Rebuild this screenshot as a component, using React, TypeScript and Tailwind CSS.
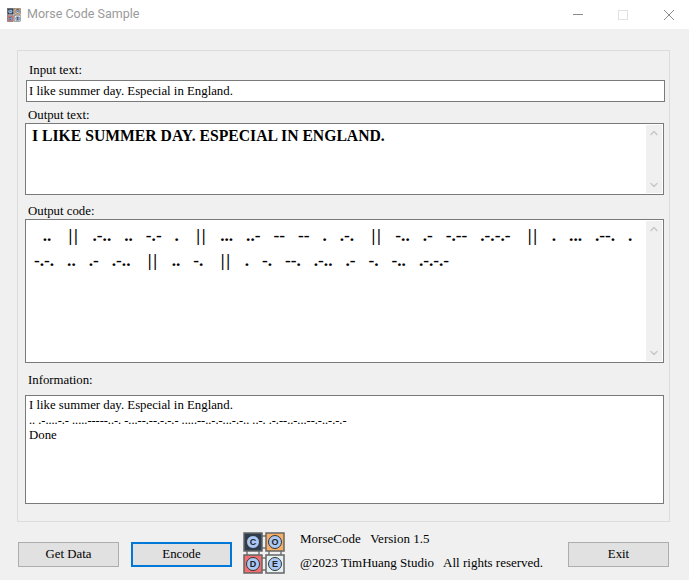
import { ChevronUp, ChevronDown } from 'lucide-react';

const serif = "font-['Liberation_Serif',serif]";

const morseLines = [
  '  ..    ||   .-..   ..   -.-   .    ||   ...   ..-   --   --   .   .-.    ||   -..   .-   -.--   .-.-.-    ||   .   ...   .--.   .',
  '-.-.   ..   .-   .-..    ||   ..   -.    ||   .   -.   --.   .-..   .-   -.   -..   .-.-.-',
];

function Logo({ size }: { size: number }) {
  const cells = [
    { x: 1, y: 1, fill: '#2c3e50', label: 'C' },
    { x: 23, y: 1, fill: '#f5b066', label: 'O' },
    { x: 1, y: 23, fill: '#f26d6d', label: 'D' },
    { x: 23, y: 23, fill: '#e4f3f1', label: 'E' },
  ];
  return (
    <svg width={size} height={size} viewBox="0 0 42 42" className="shrink-0">
      <path d="M19 4h4M19 16h4M19 26h4M19 38h4M4 19v4M16 19v4M26 19v4M38 19v4" stroke="#777" strokeWidth="1.5" />
      {cells.map((c) => (
        <g key={c.label}>
          <rect x={c.x} y={c.y} width="18" height="18" fill={c.fill} stroke="#666" strokeWidth="1.5" />
          <circle cx={c.x + 9} cy={c.y + 9} r="6.5" fill="#a9c8f5" stroke="#333" strokeWidth="1" />
          <text x={c.x + 9} y={c.y + 12.2} textAnchor="middle" fontSize="9" fontWeight="700" fill="#222" fontFamily="Liberation Sans, sans-serif">
            {c.label}
          </text>
        </g>
      ))}
    </svg>
  );
}

function ScrollBar() {
  return (
    <div className="w-[16px] my-px mr-px flex flex-col justify-between items-center bg-[#f0f0f0] shrink-0 py-[2px] text-[#c8c8c8]">
      <ChevronUp size={12} strokeWidth={3} />
      <ChevronDown size={12} strokeWidth={3} />
    </div>
  );
}

function WinButton({ label, cls = '' }: { label: string; cls?: string }) {
  return (
    <button className={`w-[101px] h-[25px] mt-[20px] bg-[#e1e1e1] text-[12.8px] text-black ${cls}`}>{label}</button>
  );
}

function MorseLine({ text }: { text: string }) {
  return (
    <div>
      {text.split('||').map((part, i) => (
        <span key={i}>
          {i > 0 && <span className="tracking-[1.7px]">||</span>}
          {part}
        </span>
      ))}
    </div>
  );
}

export default function App() {
  return (
    <div className={`w-[689px] h-[580px] bg-[#f0f0f0] flex flex-col overflow-hidden text-black ${serif}`}>
      <div className="h-[29px] bg-white flex items-center pl-[7px] shrink-0">
        <Logo size={14} />
        <span className="ml-[6px] text-[12.5px] text-[#9a9a9a] font-['Roboto',sans-serif]">Morse Code Sample</span>
        <div className="ml-auto flex items-center pr-[15px] gap-[35px]">
          <div className="w-[10px] h-px bg-[#8c8c8c]" />
          <div className="w-[10px] h-[10px] border border-[#e2e2e2]" />
          <svg width="10" height="10" viewBox="0 0 10 10" className="ml-px text-[#8c8c8c]">
            <path d="M0 0l10 10M10 0L0 10" stroke="currentColor" strokeWidth="1" />
          </svg>
        </div>
      </div>

      <div className="mt-[21px] mx-[17px] w-[653px] h-[472px] shrink-0 border border-[#dcdcdc] flex flex-col pl-[7px] text-[12.8px] leading-[15px]">
        <div className="pl-[4px] pt-[12px] h-[29px]">Input text:</div>
        <div className="ml-px w-[639px] h-[22px] bg-white border border-[#7a7a7a] pl-[2px] leading-[21px]">
          I like summer day. Especial in England.
        </div>
        <div className="pl-[3px] h-[21px] pt-[6px]">Output text:</div>
        <div className="w-[639px] h-[72px] bg-white border border-[#7a7a7a] flex">
          <div className="flex-1 pl-[6px] pt-[3px] text-[15.7px] leading-[18px] font-bold">I LIKE SUMMER DAY. ESPECIAL IN ENGLAND.</div>
          <ScrollBar />
        </div>
        <div className="pl-[3px] h-[24px] pt-[9px]">Output code:</div>
        <div className="w-[639px] h-[144px] bg-white border border-[#7a7a7a] flex">
          <div className="flex-1 pl-[8px] pt-[3px] text-[17.3px] leading-[25px] font-bold whitespace-pre">
            {morseLines.map((l) => (
              <MorseLine key={l} text={l} />
            ))}
          </div>
          <ScrollBar />
        </div>
        <div className="pl-[3px] h-[32px] pt-[10px]">Information:</div>
        <div className="w-[639px] h-[109px] bg-white border border-[#7a7a7a] pl-[3px] pt-[2px] leading-[15px]">
          <div>I like summer day. Especial in England.</div>
          <div className="text-[12.3px]">.. .-....-.- .....-----..-. -...--.--.-.-.- .....--..-.-...-.-.. ..-. .-.--..-...--.-..-.-.-</div>
          <div>Done</div>
        </div>
      </div>

      <div className="pl-[18px] pr-[20px] flex items-start flex-1 text-[13px]">
        <WinButton label="Get Data" cls="border border-[#adadad]" />
        <WinButton label="Encode" cls="ml-[12px] border-2 border-[#0078d7]" />
        <div className="ml-[11px] mt-[10px]"><Logo size={42} /></div>
        <div className="ml-[15px] mt-[9px] flex flex-col gap-[9px] leading-[15px]">
          <div className="whitespace-pre">MorseCode   Version 1.5</div>
          <div className="whitespace-pre">@2023 TimHuang Studio   All rights reserved.</div>
        </div>
        <WinButton label="Exit" cls="ml-auto border border-[#adadad]" />
      </div>
    </div>
  );
}
